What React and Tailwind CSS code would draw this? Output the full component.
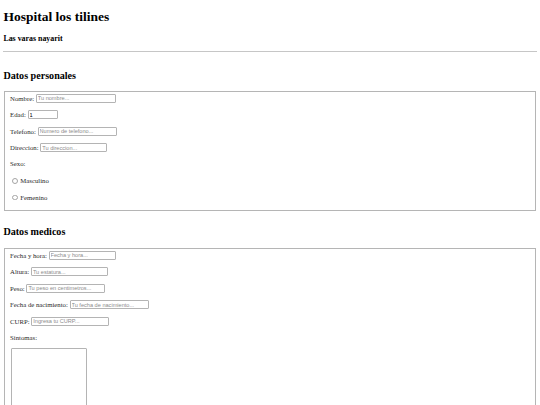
import React from 'react';

const serif = "font-['Liberation_Serif','Times_New_Roman',serif]";
const inputCls = "h-[9px] box-border border border-[#b4b4b4] rounded-[1px] bg-white px-[1px] font-['Liberation_Sans',Arial,sans-serif] text-[5.6px] leading-[7px] text-black placeholder:text-[#8c8c8c] outline-none";

function Field({ label, placeholder, width, type = 'text', value }) {
  return (
    <div className="h-[9px] flex items-center gap-[1.7px]">
      <label className="text-[6.75px] leading-[9px] text-[#2a2a2a]">{label}</label>
      <input type={type} placeholder={placeholder} defaultValue={value} className={`${inputCls} ${width}`} />
    </div>
  );
}

function Radio({ label }) {
  return (
    <div className="h-[9px] flex items-center">
      <input type="radio" name="sexo" className="appearance-none m-0 ml-[2.1px] w-[5.5px] h-[5.5px] rounded-full border border-[#a4a4a4] bg-white" />
      <label className="ml-[2.6px] text-[6.75px] leading-[9px] text-[#2a2a2a]">{label}</label>
    </div>
  );
}

export default function App() {
  return (
    <div className={`${serif} bg-white text-black min-h-[405px] px-[3.4px]`}>
      <h1 className="mt-[9px] text-[13.5px] leading-[15.5px] font-bold">Hospital los tilines</h1>
      <h3 className="mt-[9px] text-[7.9px] leading-[9px] font-bold">Las varas nayarit</h3>
      <hr className="mt-[8px] border-0 h-px bg-[#c6c6c6]" />

      <form>
        <h2 className="mt-[18.5px] text-[10.1px] leading-[11.6px] font-bold">Datos personales</h2>
        <fieldset className="mt-[9.4px] mx-[0.8px] border border-[#b5b5b5] pt-[2px] pb-[8px] px-[4.9px]">
          <div className="flex flex-col gap-[7.5px]">
            <Field label="Nombre:" placeholder="Tu nombre..." width="w-[80px]" />
            <Field label="Edad:" type="number" value="1" width="w-[30px]" />
            <Field label="Telefono:" placeholder="Numero de telefono..." width="w-[79px]" />
            <Field label="Direccion:" placeholder="Tu direccion..." width="w-[67px]" />
            <div className="h-[9px] flex items-center text-[6.75px] text-[#2a2a2a]">Sexo:</div>
            <Radio label="Masculino" />
            <Radio label="Femenino" />
          </div>
        </fieldset>

        <h2 className="mt-[15px] text-[10.1px] leading-[11.6px] font-bold">Datos medicos</h2>
        <fieldset className="mt-[10.4px] mx-[0.8px] border border-[#b5b5b5] pt-[2px] pb-[8px] px-[4.9px]">
          <div className="flex flex-col gap-[7.5px]">
            <Field label="Fecha y hora:" placeholder="Fecha y hora..." width="w-[67px]" />
            <Field label="Altura:" placeholder="Tu estatura..." width="w-[77px]" />
            <Field label="Peso:" placeholder="Tu peso en centimetros..." width="w-[79px]" />
            <Field label="Fecha de nacimiento:" placeholder="Tu fecha de nacimiento..." width="w-[79px]" />
            <Field label="CURP:" placeholder="Ingresa tu CURP..." width="w-[78px]" />
            <div className="h-[9px] flex items-center text-[6.75px] text-[#2a2a2a]">Sintomas:</div>
          </div>
          <textarea className="block mt-[6px] ml-[0.5px] w-[76px] h-[90px] box-border border border-[#b4b4b4] rounded-[1px] bg-white resize-none outline-none text-[5.6px]" />
        </fieldset>
      </form>
    </div>
  );
}
